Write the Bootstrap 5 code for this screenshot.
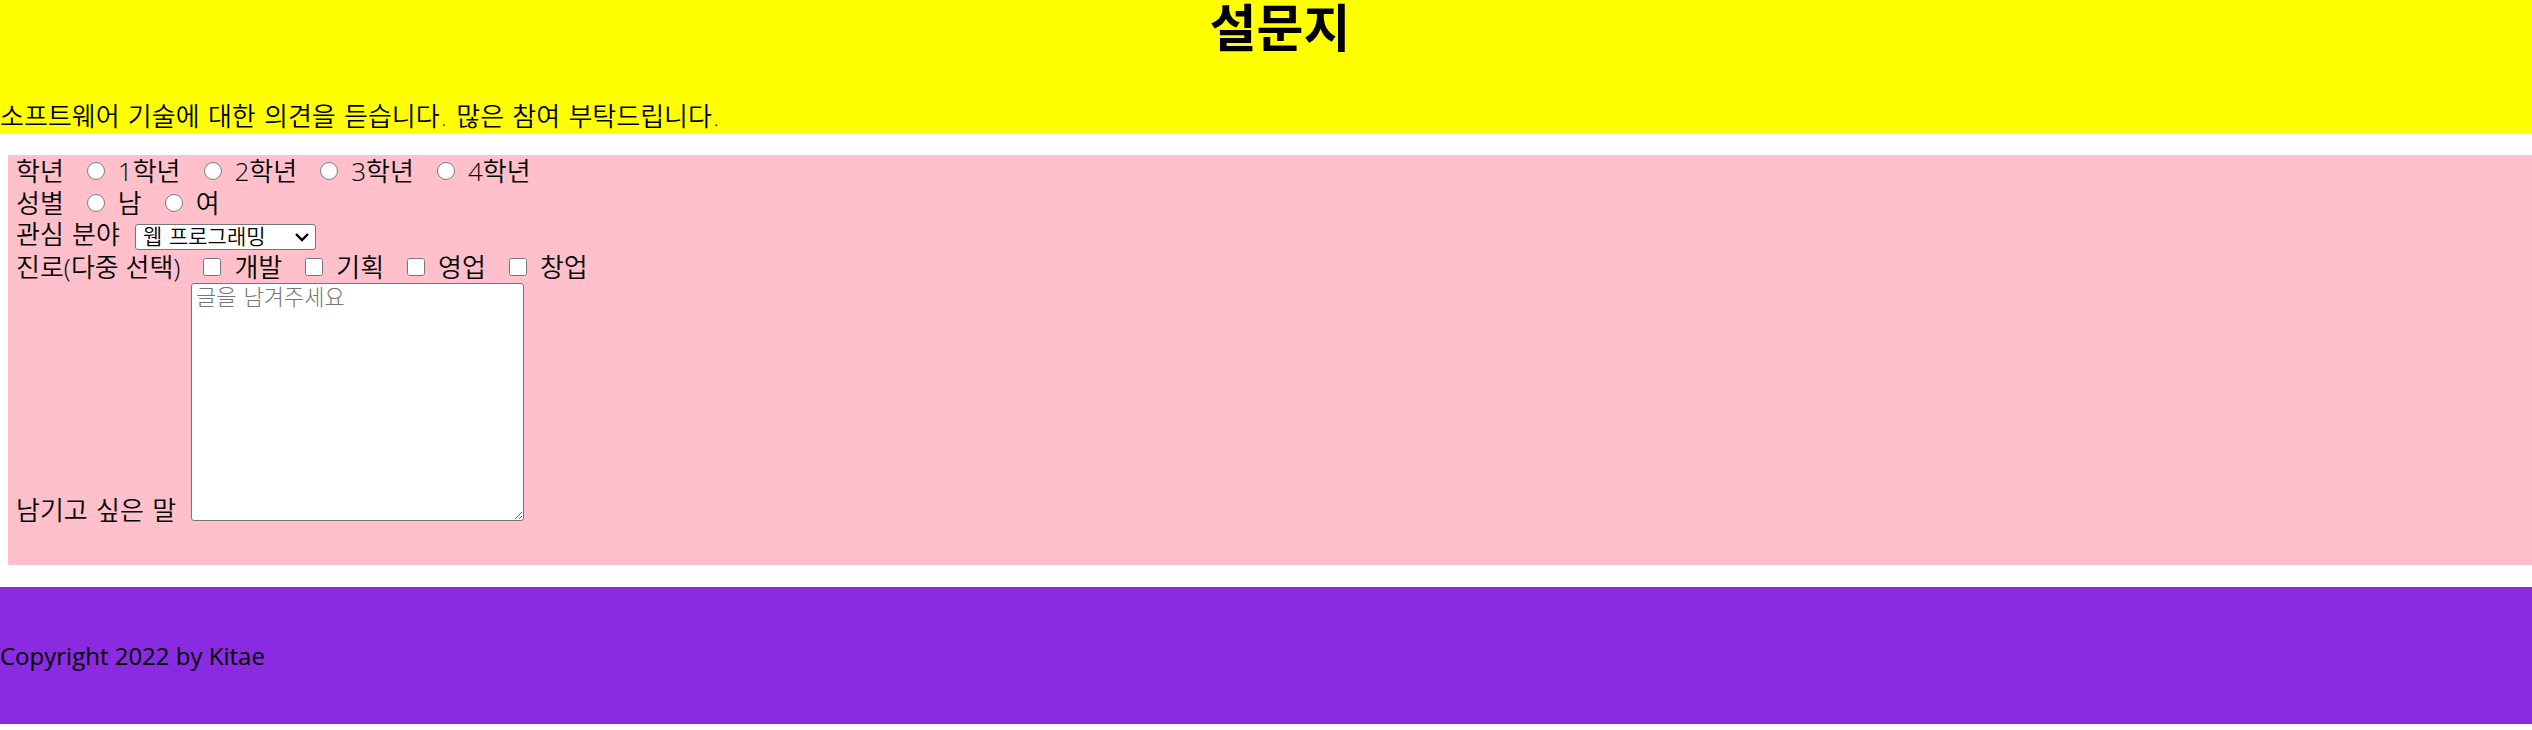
<!DOCTYPE html>
<html lang="ko">
<head>
<meta charset="utf-8">
<meta name="viewport" content="width=device-width, initial-scale=1">
<title>설문지</title>
<link href="https://cdn.jsdelivr.net/npm/bootstrap@5.3.0/dist/css/bootstrap.min.css" rel="stylesheet">
<style>
  body {
    font-family: "Open Sans", "Noto Sans CJK KR", sans-serif;
    font-size: 26px;
    line-height: 32px;
    color: #000;
    background: #fff;
  }
  .survey-head, .survey-field, .topic-select, .message-box {
    font-family: "DejaVu Sans", "Noto Sans CJK KR", sans-serif;
  }
  .survey-head, .survey-form { font-weight: 350; }
  .survey-head { background: #ff0; }
  .survey-title { font-size: 51px; line-height: 60px; padding-left: 28px; margin-bottom: 41px; }
  .survey-form { background: pink; margin: 22px 0 22px 8px; padding: 0 8px 38px; }
  .survey-row { column-gap: 23px; min-height: 32px; }
  .survey-field { column-gap: 15px; }
  .choice { column-gap: 13px; }
  .choice input { width: 18px; height: 18px; margin: 0; flex: none; }
  .topic-select {
    width: 181px; height: 26px; padding: 0 20px 0 7px; margin-top: 3px;
    font-size: 21px; line-height: 24px; font-weight: 350; color: #000;
    border: 1px solid #767676; border-radius: 3px;
    background-color: #fff;
    background-image: url("data:image/svg+xml,%3Csvg xmlns='http://www.w3.org/2000/svg' viewBox='0 0 14 14'%3E%3Cpath d='M1 4l6 6 6-6' fill='none' stroke='%23000' stroke-width='2.4'/%3E%3C/svg%3E");
    background-position: right 6px center; background-size: 14px 14px;
  }
  .message-box {
    width: 333px; height: 238px; padding: 0 4px; margin-bottom: 6px;
    font-size: 22px; line-height: 28px; font-weight: 300;
    border: 1px solid #767676; border-radius: 3px; resize: both;
  }
  .message-box::placeholder { color: #757575; }
  .survey-foot { background: blueviolet; padding: 53px 0 52px; font-size: 24px; }
</style>
</head>
<body>
<header class="survey-head">
  <h1 class="survey-title fw-bold text-center">설문지</h1>
  <p class="mb-0">소프트웨어 기술에 대한 의견을 듣습니다. 많은 참여 부탁드립니다.</p>
</header>

<form class="survey-form">
  <div class="survey-row d-flex flex-wrap align-items-center" role="radiogroup" aria-labelledby="grade">
    <span id="grade">학년</span>
    <label class="choice d-flex align-items-center"><input type="radio" name="grade">1학년</label>
    <label class="choice d-flex align-items-center"><input type="radio" name="grade">2학년</label>
    <label class="choice d-flex align-items-center"><input type="radio" name="grade">3학년</label>
    <label class="choice d-flex align-items-center"><input type="radio" name="grade">4학년</label>
  </div>
  <div class="survey-row d-flex flex-wrap align-items-center" role="radiogroup" aria-labelledby="gender">
    <span id="gender">성별</span>
    <label class="choice d-flex align-items-center"><input type="radio" name="gender">남</label>
    <label class="choice d-flex align-items-center"><input type="radio" name="gender">여</label>
  </div>
  <div class="survey-row survey-field d-flex flex-wrap align-items-center">
    <label for="topic">관심 분야</label>
    <select id="topic" class="form-select topic-select">
      <option selected>웹 프로그래밍</option>
    </select>
  </div>
  <div class="survey-row d-flex flex-wrap align-items-center" role="group" aria-labelledby="career">
    <span id="career">진로(다중 선택)</span>
    <label class="choice d-flex align-items-center"><input type="checkbox" name="career">개발</label>
    <label class="choice d-flex align-items-center"><input type="checkbox" name="career">기획</label>
    <label class="choice d-flex align-items-center"><input type="checkbox" name="career">영업</label>
    <label class="choice d-flex align-items-center"><input type="checkbox" name="career">창업</label>
  </div>
  <div class="survey-row survey-field d-flex align-items-end">
    <label for="message">남기고 싶은 말</label>
    <textarea id="message" class="message-box" placeholder="글을 남겨주세요"></textarea>
  </div>
</form>

<footer class="survey-foot">
  <p class="mb-0">Copyright 2022 by Kitae</p>
</footer>
<script src="https://cdn.jsdelivr.net/npm/bootstrap@5.3.0/dist/js/bootstrap.bundle.min.js"></script>
</body>
</html>
